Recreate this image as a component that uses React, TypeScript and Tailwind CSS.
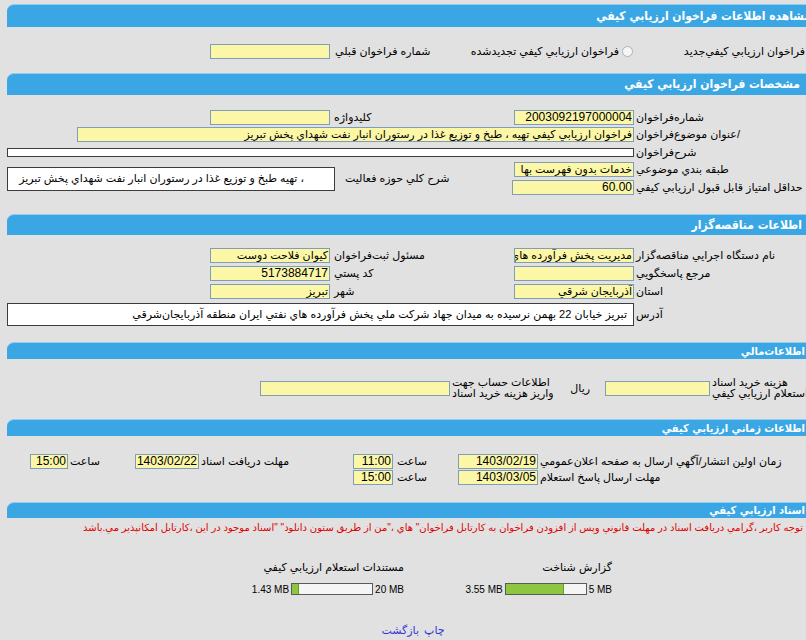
import React from "react";

type P = { w: string; children?: React.ReactNode; cls?: string; fs?: string };

const Inp = ({ w, children, cls = "", fs = "text-[12px]" }: P) => (
  <div
    className={`${w} ${fs} h-[15px] shrink-0 border border-[#7f9db9] bg-[#fbf7a6] leading-[13px] px-[1px] overflow-hidden whitespace-nowrap ${cls}`}
  >
    {children}
  </div>
);

const Lbl = ({ w, children, cls = "" }: P) => (
  <div className={`${w} shrink-0 text-left whitespace-nowrap ${cls}`}>{children}</div>
);

const Radio = () => (
  <span className="inline-block w-[11px] h-[11px] shrink-0 rounded-full border border-[#b0b0b0] bg-[#f6f6f6]" />
);

const Header = ({ title, cls }: { title: string; cls: string }) => (
  <div
    className={`bg-[#3aa7e4] rounded-tl-[7px] border-t border-[#8fcdf2] flex items-center text-white font-bold whitespace-nowrap font-['DejaVu_Sans_Condensed','DejaVu_Sans',sans-serif] ${cls}`}
  >
    {title}
  </div>
);

const AR = "text-[11px]";

export default function App() {
  return (
    <div className="w-[806px] h-[640px] overflow-hidden bg-[#e1e1e1] font-['Liberation_Sans','DejaVu_Sans',sans-serif] text-[11px] leading-[13px] text-black">
      <div dir="rtl" className="w-[812px] ml-[7px] pt-[4px] flex flex-col">
        {/* Section 1 */}
        <Header title="مشاهده اطلاعات فراخوان ارزيابي کيفي" cls="h-[23px] pr-[8px] text-[12px]" />
        <div className="mt-[16px] h-[17px] flex items-center">
          <div className="w-[183px] shrink-0 flex items-center gap-[3px] whitespace-nowrap">
            <Radio />
            <span>فراخوان ارزيابي کيفي‌جديد</span>
          </div>
          <div className="w-[160px] shrink-0 flex items-center gap-[3px] pr-[3px] whitespace-nowrap">
            <Radio />
            <span>فراخوان ارزيابي کيفي تجديدشده</span>
          </div>
          <Lbl w="w-[146px]" cls="pl-[5px]">شماره فراخوان قبلي</Lbl>
          <Inp w="w-[120px]" />
        </div>

        {/* Section 2 */}
        <Header title="مشخصات فراخوان ارزيابي کيفي" cls="mt-[13px] h-[22px] pr-[19px] text-[12px]" />
        <div className="mt-[14px] flex flex-col">
          <div className="h-[17px] flex items-center">
            <Lbl w="w-[185px]" cls="pl-[2px]">شماره‌فراخوان</Lbl>
            <Inp w="w-[120px]">2003092197000004</Inp>
            <Lbl w="w-[184px]" cls="pl-[4px]">کليدواژه</Lbl>
            <Inp w="w-[120px]" />
          </div>
          <div className="h-[17px] flex items-center">
            <Lbl w="w-[185px]" cls="pl-[2px]">/عنوان موضوع‌فراخوان</Lbl>
            <Inp w="w-[557px]" fs={AR}>فراخوان ارزيابي کيفي تهيه ، طبخ و توزيع غذا در رستوران انبار نفت شهداي پخش تبريز</Inp>
          </div>
          <div className="h-[18px] flex items-center">
            <Lbl w="w-[185px]" cls="pl-[2px]">شرح‌فراخوان</Lbl>
            <div className="w-[627px] h-[9px] shrink-0 border border-[#3c3c3c] bg-white" />
          </div>
          <div className="flex items-center">
            <div className="flex flex-col shrink-0">
              <div className="h-[17px] flex items-center">
                <Lbl w="w-[185px]" cls="pl-[2px]">طبقه بندي موضوعي</Lbl>
                <Inp w="w-[120px]" fs={AR}>خدمات بدون فهرست بها</Inp>
              </div>
              <div className="h-[18px] flex items-center">
                <Lbl w="w-[185px]" cls="pl-[2px]">حداقل امتياز قابل قبول ارزيابي کيفي</Lbl>
                <Inp w="w-[122px]">60.00</Inp>
              </div>
            </div>
            <Lbl w="w-[177px]" cls="pl-[10px]">شرح کلي حوزه فعاليت</Lbl>
            <div className="w-[328px] h-[24px] shrink-0 border border-[#3c3c3c] bg-white flex items-center pr-[30px] whitespace-nowrap overflow-hidden">
              ، تهيه طبخ و توزيع غذا در رستوران انبار نفت شهداي پخش تبريز
            </div>
          </div>
        </div>

        {/* Section 3 */}
        <Header title="اطلاعات مناقصه‌گزار" cls="mt-[18px] h-[21px] pr-[17px] text-[12px]" />
        <div className="mt-[11px] flex flex-col">
          <div className="h-[18px] flex items-center">
            <Lbl w="w-[185px]" cls="pl-[2px]">نام دستگاه اجرايي مناقصه‌گزار</Lbl>
            <Inp w="w-[120px]" fs={AR}>مديريت پخش فرآورده هاي نفتي</Inp>
            <Lbl w="w-[184px]" cls="pl-[4px]">مسئول ثبت‌فراخوان</Lbl>
            <Inp w="w-[120px]" fs={AR}>کيوان فلاحت دوست</Inp>
          </div>
          <div className="h-[18px] flex items-center">
            <Lbl w="w-[185px]" cls="pl-[2px]">مرجع پاسخگويي</Lbl>
            <Inp w="w-[120px]" />
            <Lbl w="w-[184px]" cls="pl-[4px]">کد پستي</Lbl>
            <Inp w="w-[120px]">5173884717</Inp>
          </div>
          <div className="h-[18px] flex items-center">
            <Lbl w="w-[185px]" cls="pl-[2px]">استان</Lbl>
            <Inp w="w-[120px]" fs={AR}>آذربايجان شرقي</Inp>
            <Lbl w="w-[184px]" cls="pl-[4px]">شهر</Lbl>
            <Inp w="w-[120px]" fs={AR}>تبريز</Inp>
          </div>
          <div className="mt-[3px] flex items-center">
            <Lbl w="w-[185px]" cls="pl-[2px]">آدرس</Lbl>
            <div className="w-[627px] h-[23px] shrink-0 border border-[#3c3c3c] bg-white flex items-center pr-[6px] whitespace-nowrap overflow-hidden">
              تبريز خيابان 22 بهمن نرسيده به ميدان جهاد شرکت ملي پخش فرآورده هاي نفتي ايران منطقه آذربايجان‌شرقي
            </div>
          </div>
        </div>

        {/* Section 4 */}
        <Header title="اطلاعات‌مالي" cls="mt-[16px] h-[17px] pr-[14px] text-[11px]" />
        <div className="mt-[17px] h-[24px] flex items-center">
          <Lbl w="w-[109px]" cls="pl-[2px] leading-[11px]">
            هزينه خريد اسناد
            <br />
            استعلام ارزيابي کيفي
          </Lbl>
          <Inp w="w-[105px]" />
          <div className="w-[45px] shrink-0 pr-[15px]">ريال</div>
          <Lbl w="w-[110px]" cls="pl-[2px] leading-[11px]">
            اطلاعات حساب جهت
            <br />
            واريز هزينه خريد اسناد
          </Lbl>
          <Inp w="w-[190px]" />
        </div>

        {/* Section 5 */}
        <Header title="اطلاعات زماني ارزيابي کيفي" cls="mt-[19px] h-[17px] pr-[14px] text-[11px]" />
        <div className="mt-[17px] flex flex-col">
          <div className="h-[16px] flex items-center">
            <Lbl w="w-[281px]" cls="pl-[2px]">زمان اولين انتشار/آگهي ارسال به صفحه اعلان‌عمومي</Lbl>
            <Inp w="w-[80px]">1403/02/19</Inp>
            <Lbl w="w-[65px]" cls="pl-[4px]">ساعت</Lbl>
            <Inp w="w-[40px]">11:00</Inp>
            <Lbl w="w-[154px]" cls="pl-[2px]">مهلت دريافت اسناد</Lbl>
            <Inp w="w-[64px]">1403/02/22</Inp>
            <Lbl w="w-[67px]" cls="pl-[2px]">ساعت</Lbl>
            <Inp w="w-[38px]">15:00</Inp>
          </div>
          <div className="h-[16px] flex items-center">
            <Lbl w="w-[281px]" cls="pl-[2px]">مهلت ارسال پاسخ استعلام</Lbl>
            <Inp w="w-[80px]">1403/03/05</Inp>
            <Lbl w="w-[65px]" cls="pl-[4px]">ساعت</Lbl>
            <Inp w="w-[40px]">15:00</Inp>
          </div>
        </div>

        {/* Section 6 */}
        <Header title="اسناد ارزيابي کيفي" cls="mt-[17px] h-[16px] pr-[14px] text-[11px]" />
        <div className="mt-[2px] h-[14px] pr-[16px] flex items-center whitespace-nowrap text-[10px] text-[#e00000]">
          {'توجه کاربر ،گرامي دريافت اسناد در مهلت قانوني وپس از افزودن فراخوان به کارتابل فراخوان" هاي ،"من از طريق ستون دانلود" "اسناد موجود در اين ،کارتابل امکانپذير مي.باشد'}
        </div>

        <div className="mt-[27px] flex">
          <div className="mr-[207px] w-[142px] shrink-0 flex flex-col">
            <div className="h-[13px] whitespace-nowrap">گزارش شناخت</div>
            <div className="mt-[8px] h-[14px] flex items-center gap-[2px] text-[10px] whitespace-nowrap">
              <span dir="ltr">5 MB</span>
              <div dir="ltr" className="w-[82px] h-[12px] shrink-0 border border-[#5a5a5a] bg-[#f5f5f5] flex">
                <div className="w-[58px] h-full bg-[#8ec63f] border-r border-[#6b9a2a]" />
              </div>
              <span dir="ltr">3.55 MB</span>
            </div>
          </div>
          <div className="mr-[66px] w-[146px] shrink-0 flex flex-col">
            <div className="h-[13px] whitespace-nowrap">مستندات استعلام ارزيابي کيفي</div>
            <div className="mt-[8px] h-[14px] flex items-center gap-[2px] text-[10px] whitespace-nowrap">
              <span dir="ltr">20 MB</span>
              <div dir="ltr" className="w-[82px] h-[12px] shrink-0 border border-[#5a5a5a] bg-[#f5f5f5] flex">
                <div className="w-[7px] h-full bg-[#8ec63f] border-r border-[#6b9a2a]" />
              </div>
              <span dir="ltr">1.43 MB</span>
            </div>
          </div>
        </div>

        <div className="mt-[28px] flex justify-center gap-[5px] text-[#3434d6] text-[11px]">
          <span>چاپ</span>
          <span>بازگشت</span>
        </div>
      </div>
    </div>
  );
}
